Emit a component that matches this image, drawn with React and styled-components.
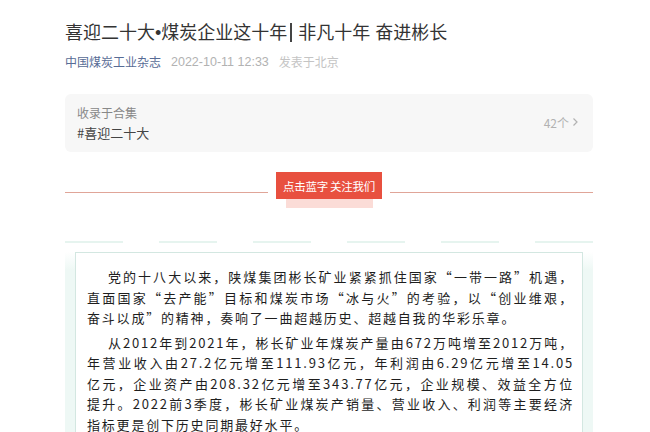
import React from 'react';
import styled, { createGlobalStyle } from 'styled-components';

const GlobalStyle = createGlobalStyle`
  html, body {
    margin: 0;
    padding: 0;
    background: #fff;
  }
  body {
    font-family: "Liberation Sans", "Noto Sans CJK SC", sans-serif;
  }
`;

const Page = styled.article`
  width: 528px;
  margin-left: 65px;
  font-family: "Noto Sans CJK SC", sans-serif;
`;

const Title = styled.h1`
  margin: 20px 0 0;
  font-family: "Liberation Sans", "Noto Sans CJK SC", sans-serif;
  font-size: 18px;
  line-height: 26px;
  font-weight: 400;
  color: #333;
  white-space: nowrap;
`;

const Bar = styled.span`
  display: inline-block;
  width: 2px;
  height: 19px;
  margin: 0 6px 0 3px;
  vertical-align: -3px;
  background: #444;
`;

const Meta = styled.div`
  display: flex;
  align-items: center;
  gap: 10px;
  margin-top: 6px;
  font-size: 12px;
  line-height: 20px;
`;

const Author = styled.span`
  color: #576b95;
`;

const Faint = styled.span`
  color: ${(p) => (p.$light ? '#c4c4c4' : '#b2b2b2')};
  font-family: ${(p) => (p.$num ? '"Liberation Sans", sans-serif' : 'inherit')};
  font-size: ${(p) => (p.$num ? '12.5px' : '12px')};
`;

const Album = styled.div`
  display: flex;
  align-items: center;
  justify-content: space-between;
  margin-top: 22px;
  height: 58px;
  box-sizing: border-box;
  padding: 9px 14px 9px 12px;
  background: #f7f7f7;
  border-radius: 6px;
`;

const AlbumText = styled.div`
  display: flex;
  flex-direction: column;
  line-height: 20px;
`;

const AlbumLabel = styled.span`
  font-size: 12px;
  color: #888;
`;

const AlbumTag = styled.span`
  font-size: 13px;
  color: #444;
`;

const AlbumCount = styled.span`
  display: flex;
  align-items: center;
  gap: 3px;
  font-size: 12px;
  color: #b2b2b2;
  padding-bottom: 2px;
`;

const Divider = styled.div`
  display: flex;
  align-items: center;
  gap: 8px;
  margin-top: 20px;
`;

const Rule = styled.span`
  flex: 1;
  height: 1px;
  margin-top: 4px;
  background: #e0a598;
`;

const FollowWrap = styled.div`
  display: flex;
  flex-direction: column;
  align-items: center;
`;

const Follow = styled.span`
  width: 106px;
  height: 27px;
  display: flex;
  align-items: center;
  justify-content: center;
  background: #e8503f;
  color: #fff;
  font-size: 11.5px;
  letter-spacing: -0.3px;
`;

const FollowShadow = styled.span`
  width: 87px;
  height: 9px;
  background: #fbdcd7;
`;

const Dashes = styled.div`
  display: flex;
  justify-content: space-between;
  margin-top: 33px;
`;

const Dash = styled.span`
  width: 58px;
  height: 2px;
  background: #e6f4ef;
`;

const Frame = styled.div`
  margin-top: 9px;
  padding: 0 10px;
  background: linear-gradient(#fff 0, #eef8f5 18px);
`;

const Box = styled.div`
  border: 1px solid #d3e7e1;
  border-bottom: none;
  background: #fff;
  padding: 14px 8px 20px 11px;
  font-family: "Noto Sans CJK SC", sans-serif;
  font-size: 13px;
  line-height: 20.5px;
  letter-spacing: 1.8px;
  color: #1e1e1e;
`;

const Paragraph = styled.div`
  & + & {
    margin-top: 4px;
  }
`;

const Line = styled.div`
  white-space: nowrap;
  text-align: ${(p) => (p.$last ? 'left' : 'justify')};
  text-align-last: ${(p) => (p.$last ? 'left' : 'justify')};
  text-indent: ${(p) => (p.$indent ? '21px' : '0')};
`;

const paragraphs = [
  [
    '党的十八大以来，陕煤集团彬长矿业紧紧抓住国家“一带一路”机遇，',
    '直面国家“去产能”目标和煤炭市场“冰与火”的考验，以“创业维艰，',
    '奋斗以成”的精神，奏响了一曲超越历史、超越自我的华彩乐章。',
  ],
  [
    '从2012年到2021年，彬长矿业年煤炭产量由672万吨增至2012万吨，',
    '年营业收入由27.2亿元增至111.93亿元，年利润由6.29亿元增至14.05',
    '亿元，企业资产由208.32亿元增至343.77亿元，企业规模、效益全方位',
    '提升。2022前3季度，彬长矿业煤炭产销量、营业收入、利润等主要经济',
    '指标更是创下历史同期最好水平。',
  ],
];

function Chevron() {
  return (
    <svg width="7" height="10" viewBox="0 0 7 10" fill="none">
      <path d="M1.5 1.5 L5 5 L1.5 8.5" stroke="#b2b2b2" strokeWidth="1.2" />
    </svg>
  );
}

export default function App() {
  return (
    <>
      <GlobalStyle />
      <Page lang="zh-CN">
        <Title>
          喜迎二十大•煤炭企业这十年<Bar />非凡十年 奋进彬长
        </Title>
        <Meta>
          <Author>中国煤炭工业杂志</Author>
          <Faint $num>2022-10-11 12:33</Faint>
          <Faint $light>发表于北京</Faint>
        </Meta>

        <Album>
          <AlbumText>
            <AlbumLabel>收录于合集</AlbumLabel>
            <AlbumTag>#喜迎二十大</AlbumTag>
          </AlbumText>
          <AlbumCount>
            42个 <Chevron />
          </AlbumCount>
        </Album>

        <Divider>
          <Rule />
          <FollowWrap>
            <Follow>点击蓝字 关注我们</Follow>
            <FollowShadow />
          </FollowWrap>
          <Rule />
        </Divider>

        <Dashes>
          {Array.from({ length: 6 }).map((_, i) => (
            <Dash key={i} />
          ))}
        </Dashes>

        <Frame>
          <Box>
            {paragraphs.map((lines, p) => (
              <Paragraph key={p}>
                {lines.map((text, i) => (
                  <Line
                    key={i}
                    $indent={i === 0}
                    $last={i === lines.length - 1}
                  >
                    {text}
                  </Line>
                ))}
              </Paragraph>
            ))}
          </Box>
        </Frame>
      </Page>
    </>
  );
}
